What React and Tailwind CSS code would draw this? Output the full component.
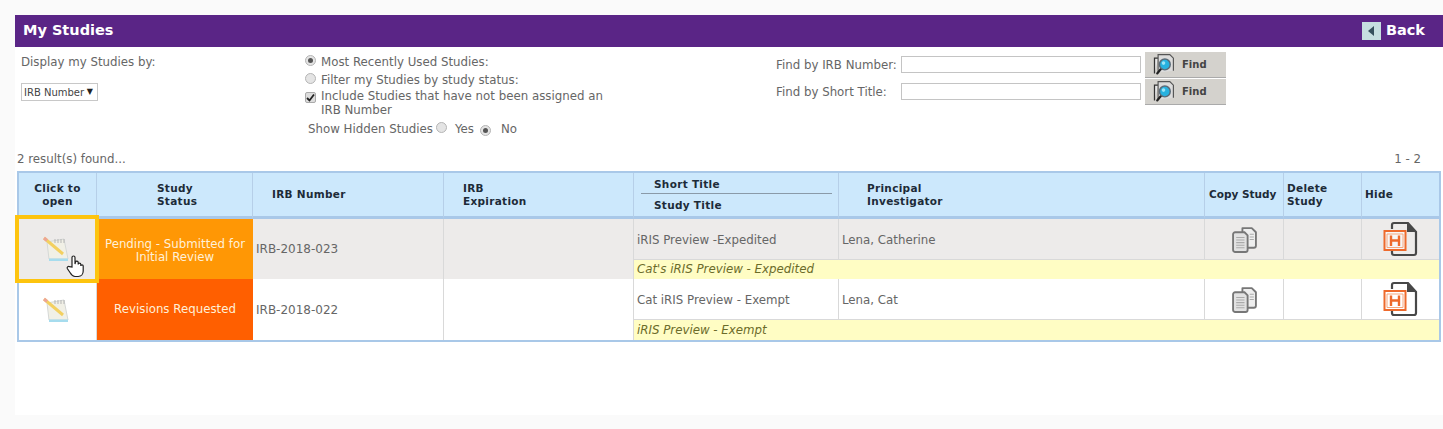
const font = { fontFamily: '"DejaVu Sans", Verdana, sans-serif' };

function Radio({ on }) {
  return (
    <span className="inline-flex h-[11px] w-[11px] shrink-0 items-center justify-center rounded-full border border-[#b5b5b5] bg-[#e4e4e4]">
      {on && <span className="h-[5px] w-[5px] rounded-full bg-[#555]" />}
    </span>
  );
}

function FindIcon() {
  return (
    <svg width="27" height="26" viewBox="0 0 30 27" className="shrink-0">
      <path d="M5 24V7h4" fill="#e8e8e8" stroke="#333" strokeWidth="1.4" />
      <path d="M9 23V3h13l4 4v14" fill="#dcdcdc" stroke="#555" strokeWidth="1.3" />
      <path d="M8 24l5-6" stroke="#222" strokeWidth="2.4" strokeLinecap="round" />
      <circle cx="16.5" cy="14" r="6" fill="#27b2e0" stroke="#5a6b78" strokeWidth="1.6" />
      <circle cx="15" cy="12.5" r="2" fill="#9be4f7" />
    </svg>
  );
}

function FindRow({ label }) {
  return (
    <div className="flex h-[27px] items-center">
      <span className="w-[125px] whitespace-nowrap pt-[2px] text-[11.8px] text-[#666]">{label}</span>
      <div className="h-[17px] w-[240px] border border-[#c4c4c4] bg-white" />
      <div className="ml-[4px] flex h-[26px] w-[81px] items-center border-b border-[#aaa] bg-[#d4d2cd] pl-[5px]">
        <FindIcon />
        <span className="ml-[5px] text-[10px] font-bold text-[#444]">Find</span>
      </div>
    </div>
  );
}

function NoteIcon() {
  return (
    <svg width="27" height="26" viewBox="0 0 27 26" className="block">
      <path d="M5 6l17-3 4 20H7z" fill="#f1f0e6" stroke="#d5d8d6" />
      <path d="M7 22.500h19V25H7z" fill="#a6dcee" />
      <path d="M13 3v4M16 3v4M19 3v4M22 3v4" stroke="#b5b5b5" />
      <path d="M2 2l19 16" stroke="#f3d060" strokeWidth="3" />
      <path d="M2 2l3 2.500" stroke="#eda596" strokeWidth="3" />
    </svg>
  );
}

function HandIcon() {
  return (
    <svg width="20" height="24" viewBox="0 0 20 24" className="absolute left-[47px] top-[35px]">
      <path
        d="M6 13V3.500a1.500 1.500 0 0 1 3 0V10l.5-2a1.400 1.400 0 0 1 2.700.4V10.500a1.300 1.300 0 0 1 2.600 0V12a1.200 1.200 0 0 1 2.400 0v5c0 3-2 5.500-5 5.500H9c-2.500 0-3.500-1.500-5-4l-2.700-4a1.500 1.500 0 0 1 2.300-1.800z"
        fill="#fff"
        stroke="#222"
        strokeWidth="1.200"
      />
    </svg>
  );
}

function CopyIcon() {
  return (
    <svg width="27" height="27" viewBox="0 0 26 26" className="mx-auto block">
      <path d="M11 2h9l4 4v13a2 2 0 0 1-2 2H11z" fill="#eeeeee" stroke="#777" strokeWidth="1.800" strokeLinejoin="round" />
      <path d="M2 8a2 2 0 0 1 2-2h9l3 3v14a2 2 0 0 1-2 2H4a2 2 0 0 1-2-2z" fill="#e2e2e2" stroke="#777" strokeWidth="1.800" />
      <path d="M5 11h8M5 13.500h8M5 16h8M5 18.500h8M5 21h8" stroke="#aaa" />
      <path d="M18 8h4M18 10.500h4M18 13h4" stroke="#aaa" />
    </svg>
  );
}

function HideIcon() {
  return (
    <svg width="36" height="36" viewBox="0 0 36 36" className="mx-auto block">
      <path d="M9 8V4a2 2 0 0 1 2-2h14l8 9v21a2 2 0 0 1-2 2H11a2 2 0 0 1-2-2v-2" fill="none" stroke="#484848" strokeWidth="2.200" />
      <path d="M24 2l9 9h-9z" fill="#484848" />
      <rect x="1.500" y="10" width="21" height="19" fill="#fff" fillOpacity="0.500" stroke="#ee6a2c" strokeWidth="2" />
      <path d="M4 13h16v13.500H4z" fill="none" stroke="#f6a77f" />
      <path d="M8 14.500v10.500M16 14.500v10.500M8 19.500h8" stroke="#ee6a2c" strokeWidth="2.400" fill="none" />
    </svg>
  );
}

const th = "border-r border-b-[3px] border-r-[#b6cfe8] border-b-[#a9c8e8] bg-[#cce8fc] align-middle text-[10.5px] font-bold leading-[13px] tracking-[0.3px] text-[#1d2b38]";

function Row({ bg, status, statusBg, number, short, pi, title, first }) {
  const cell = "border-r border-b border-[#d9d9d9]";
  return (
    <>
      <tr className={`${bg} h-[41px]`}>
        <td rowSpan={2} className="border-r border-[#d9d9d9] align-middle">
          <div className="flex justify-center pr-[5px]">
            <NoteIcon />
          </div>
        </td>
        <td rowSpan={2} className={`${statusBg} px-[4px] ${first ? "pt-[3px]" : "pt-0"} text-center align-middle text-[11.8px] leading-[13px] text-[#fff0d8]`}>
          {status}
        </td>
        <td rowSpan={2} className="border-r border-[#d9d9d9] pl-[3px] text-[12px] text-[#666]">{number}</td>
        <td rowSpan={2} className="border-r border-[#d9d9d9]" />
        <td className={`${cell} pl-[3px] pt-[3px] text-[11.8px] text-[#666]`}>{short}</td>
        <td className={`${cell} pl-[3px] pt-[3px] text-[11.8px] text-[#666]`}>{pi}</td>
        <td className={cell}><CopyIcon /></td>
        <td className={cell} />
        <td className="border-b border-[#d9d9d9]"><HideIcon /></td>
      </tr>
      <tr className={`${first ? "h-[19px]" : "h-[20px]"} bg-[#fffdc4]`}>
        <td colSpan={5} className="pl-[3px] pt-[1px] text-[11.8px] italic text-[#6b6b2a]">{title}</td>
      </tr>
    </>
  );
}

export default function App() {
  return (
    <div style={font} className="h-[429px] w-[1443px] overflow-hidden bg-[#fafafa] pl-[15px] pt-[15px]">
      <div className="relative h-[400px] bg-white">
        <div className="flex h-[32px] items-center justify-between bg-[#5a2586] pl-[8px] pr-[18px] text-[14.5px] font-bold text-white">
          <span>My Studies</span>
          <span className="flex items-center gap-[5px]">
            <span className="flex h-[18px] w-[19px] items-center justify-center bg-[#c6dfe0]">
              <svg width="8" height="12" viewBox="0 0 8 12"><path d="M7 1v10L1 6z" fill="#35505c" /></svg>
            </span>
            Back
          </span>
        </div>

        <div className="flex h-[100px] text-[11.8px] text-[#666]">
          <div className="w-[290px] pl-[6px] pt-[8px]">
            <div className="leading-[14px]">Display my Studies by:</div>
            <div className="mt-[14px] flex h-[18px] w-[77px] items-center justify-between whitespace-nowrap border border-[#c8c8c8] pl-[2px] pr-[4px] text-[10px] text-[#444]">
              IRB Number <span className="text-[8px] text-[#222]">▼</span>
            </div>
          </div>
          <div className="w-[471px] pt-[8px] leading-[14px]">
            <div className="flex h-[18px] items-start gap-[5px]"><Radio on />Most Recently Used Studies:</div>
            <div className="flex h-[16px] items-start gap-[5px]"><Radio />Filter my Studies by study status:</div>
            <div className="flex items-start gap-[5px]">
              <span className="mt-[3px] flex h-[11px] w-[11px] shrink-0 items-center justify-center rounded-[2px] border border-[#aaa] bg-[#ddd]">
                <svg width="9" height="9" viewBox="0 0 9 9"><path d="M1 5l2.500 2.500L8 1.500" fill="none" stroke="#222" strokeWidth="1.800" /></svg>
              </span>
              <span className="w-[285px]">Include Studies that have not been assigned an IRB Number</span>
            </div>
            <div className="mt-[5px] flex items-center pl-[3px]">
              Show Hidden Studies<span className="ml-[3px]"><Radio /></span>
              <span className="ml-[8px]">Yes</span><span className="ml-[6px]"><Radio on /></span>
              <span className="ml-[10px]">No</span>
            </div>
          </div>
          <div className="pt-[4px]">
            <FindRow label="Find by IRB Number:" />
            <FindRow label="Find by Short Title:" />
          </div>
        </div>

        <div className="flex h-[24px] items-center justify-between pl-[2px] pr-[22px] pt-[2px] text-[11.8px] text-[#666]">
          <span>2 result(s) found...</span>
          <span>1 - 2</span>
        </div>

        <table className="ml-[2px] w-[1424px] table-fixed border-separate border-spacing-0 border-2 border-[#a9c8e8]">
          <colgroup>
            <col className="w-[78px]" />
            <col className="w-[156px]" />
            <col className="w-[191px]" />
            <col className="w-[190px]" />
            <col className="w-[205px]" />
            <col className="w-[366px]" />
            <col className="w-[79px]" />
            <col className="w-[78px]" />
            <col />
          </colgroup>
          <thead>
            <tr className="h-[46px]">
              <th className={`${th} text-center`}>Click to<br />open</th>
              <th className={`${th} pl-[60px] text-left`}>Study<br />Status</th>
              <th className={`${th} pl-[19px] text-left`}>IRB Number</th>
              <th className={`${th} pl-[19px] text-left`}>IRB<br />Expiration</th>
              <th className={`${th} pl-[7px] pr-[6px] text-left`}>
                <div className="border-b border-[#8a9aa8] pb-[2px] pl-[13px] pt-[1px]">Short Title</div>
                <div className="pl-[13px] pt-[5px]">Study Title</div>
              </th>
              <th className={`${th} pl-[28px] text-left`}>Principal<br />Investigator</th>
              <th className={`${th} pl-[4px] text-left tracking-normal`}>Copy Study</th>
              <th className={`${th} pl-[3px] text-left`}>Delete<br />Study</th>
              <th className={`${th} border-r-0 pl-[3px] text-left`}>Hide</th>
            </tr>
          </thead>
          <tbody>
            <Row first bg="bg-[#edebea]" statusBg="bg-[#ff9705]" status="Pending - Submitted for Initial Review" number="IRB-2018-023" short="iRIS Preview -Expedited" pi="Lena, Catherine" title="Cat's iRIS Preview - Expedited" />
            <Row bg="bg-white" statusBg="bg-[#ff5f00]" status="Revisions Requested" number="IRB-2018-022" short="Cat iRIS Preview - Exempt" pi="Lena, Cat" title="iRIS Preview - Exempt" />
          </tbody>
        </table>

        <div className="absolute left-0 top-[200px] h-[68px] w-[84px] border-[4px] border-[#fdc40f]">
          <HandIcon />
        </div>
      </div>
    </div>
  );
}
